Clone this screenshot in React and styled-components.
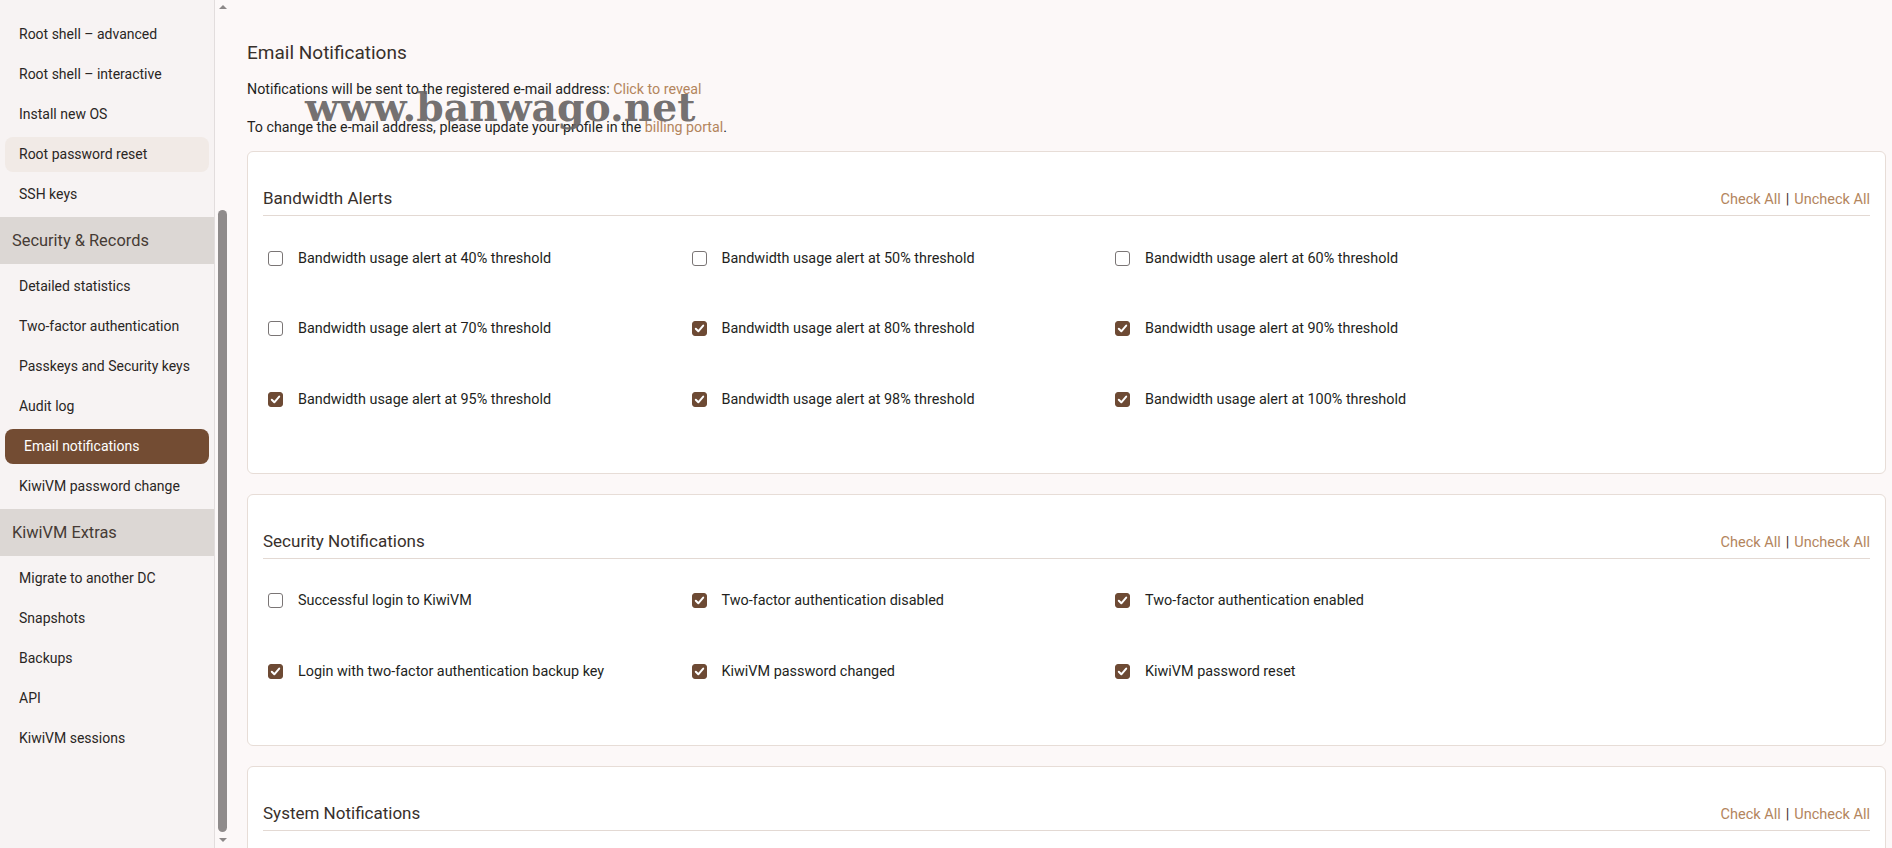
import React from "react";
import styled, { createGlobalStyle } from "styled-components";

const GlobalStyle = createGlobalStyle`
  html, body {
    margin: 0;
    padding: 0;
    height: 100%;
    overflow: hidden;
  }
  body {
    font-family: Roboto, "Noto Sans", Arial, sans-serif;
    background: #fcf8f8;
    color: #212529;
  }
  * { box-sizing: border-box; }
`;

const Page = styled.div`
  display: flex;
  height: 100vh;
  overflow: hidden;
`;

const SidebarWrap = styled.aside`
  flex: 0 0 229px;
  display: flex;
  height: 100%;
`;

const Nav = styled.nav`
  width: 215px;
  border-right: 1px solid #e2dddd;
  background: #f7f3f3;
  display: flex;
  flex-direction: column;
  padding-top: 14px;
  overflow: hidden;
`;

const NavLink = styled.a`
  display: flex;
  align-items: center;
  height: 35px;
  margin: 2.5px 5px;
  padding-left: ${(p) => (p.$active ? "19px" : "14px")};
  border-radius: 8px;
  font-size: 14px;
  color: ${(p) => (p.$active ? "#ffffff" : "#2a2624")};
  background: ${(p) =>
    p.$active ? "#734c33" : p.$hover ? "#f1eae6" : "transparent"};
  text-decoration: none;
  white-space: nowrap;
`;

const NavHeader = styled.div`
  display: flex;
  align-items: center;
  height: 47px;
  margin: 2.5px 0;
  padding-left: 12px;
  background: #dcd7d4;
  color: #463b35;
  font-size: 16.4px;
  font-weight: 400;
`;

const ScrollTrack = styled.div`
  width: 14px;
  display: flex;
  flex-direction: column;
  align-items: center;
  padding-top: 5px;
  padding-left: 1px;
`;

const ArrowUp = styled.div`
  width: 0;
  height: 0;
  border-left: 4.5px solid transparent;
  border-right: 4.5px solid transparent;
  border-bottom: 4px solid #8c8888;
`;

const ArrowDown = styled.div`
  width: 0;
  height: 0;
  margin-top: 6px;
  border-left: 4.5px solid transparent;
  border-right: 4.5px solid transparent;
  border-top: 4px solid #8c8888;
`;

const Thumb = styled.div`
  width: 9px;
  height: 622px;
  margin-top: 201px;
  border-radius: 5px;
  background: #8f8b8b;
`;

const Main = styled.main`
  position: relative;
  flex: 1;
  min-width: 0;
  padding: 0 6px 0 18px;
  overflow: hidden;
`;

const Title = styled.h2`
  margin: 41px 0 14px;
  font-size: 19px;
  line-height: 24px;
  font-weight: 400;
  color: #38302c;
`;

const Intro = styled.p`
  margin: 0 0 18px;
  font-size: 14.25px;
  line-height: 20px;
  color: #231f1d;
  &:last-of-type {
    margin-bottom: 14px;
  }
`;

const Link = styled.a`
  color: #b3855d;
  text-decoration: none;
`;

const Watermark = styled.div`
  position: absolute;
  left: 76px;
  top: 88px;
  font-family: "DejaVu Serif", "Liberation Serif", serif;
  font-weight: 700;
  font-size: 39.3px;
  line-height: 39px;
  color: rgba(104, 100, 100, 0.92);
  pointer-events: none;
  white-space: nowrap;
`;

const Card = styled.section`
  background: #ffffff;
  border: 1px solid #e7ddd7;
  border-radius: 6px;
  padding: 0 15px;
  margin-bottom: 20px;
`;

const CardHeader = styled.div`
  display: flex;
  justify-content: space-between;
  align-items: baseline;
  padding: 34px 0 5px;
  border-bottom: 1px solid #e3d9d3;
`;

const CardTitle = styled.h3`
  margin: 0;
  font-size: 17px;
  line-height: 24px;
  font-weight: 400;
  color: #38302c;
`;

const Actions = styled.div`
  font-size: 14.5px;
  color: #b3855d;
  display: flex;
  align-items: baseline;
`;

const Sep = styled.span`
  color: #3f322a;
  margin: 0 5px;
`;

const Grid = styled.div`
  display: grid;
  grid-template-columns: repeat(3, 423.5px);
  grid-auto-rows: 70.5px;
  padding: 7px 0 38px 5px;
`;

const Item = styled.label`
  display: flex;
  align-items: center;
  gap: 15px;
  font-size: 14.4px;
  color: #231f1d;
`;

const Box = styled.span`
  flex: 0 0 15px;
  width: 15px;
  height: 15px;
  border-radius: 3px;
  border: 1px solid ${(p) => (p.$checked ? "#6d4a34" : "#7a7575")};
  background: ${(p) => (p.$checked ? "#6d4a34" : "#ffffff")};
  display: flex;
  align-items: center;
  justify-content: center;
`;

const Check = ({ checked }) => (
  <Box $checked={checked}>
    {checked && (
      <svg width="11" height="11" viewBox="0 0 11 11">
        <path
          d="M1.8 5.8 L4.3 8.3 L9.2 2.6"
          fill="none"
          stroke="#ffffff"
          strokeWidth="2"
          strokeLinecap="round"
          strokeLinejoin="round"
        />
      </svg>
    )}
  </Box>
);

const nav = [
  { t: "Root shell – advanced" },
  { t: "Root shell – interactive" },
  { t: "Install new OS" },
  { t: "Root password reset", hover: true },
  { t: "SSH keys" },
  { h: "Security & Records" },
  { t: "Detailed statistics" },
  { t: "Two-factor authentication" },
  { t: "Passkeys and Security keys" },
  { t: "Audit log" },
  { t: "Email notifications", active: true },
  { t: "KiwiVM password change" },
  { h: "KiwiVM Extras" },
  { t: "Migrate to another DC" },
  { t: "Snapshots" },
  { t: "Backups" },
  { t: "API" },
  { t: "KiwiVM sessions" },
];

const sections = [
  {
    title: "Bandwidth Alerts",
    items: [
      ["Bandwidth usage alert at 40% threshold", false],
      ["Bandwidth usage alert at 50% threshold", false],
      ["Bandwidth usage alert at 60% threshold", false],
      ["Bandwidth usage alert at 70% threshold", false],
      ["Bandwidth usage alert at 80% threshold", true],
      ["Bandwidth usage alert at 90% threshold", true],
      ["Bandwidth usage alert at 95% threshold", true],
      ["Bandwidth usage alert at 98% threshold", true],
      ["Bandwidth usage alert at 100% threshold", true],
    ],
  },
  {
    title: "Security Notifications",
    items: [
      ["Successful login to KiwiVM", false],
      ["Two-factor authentication disabled", true],
      ["Two-factor authentication enabled", true],
      ["Login with two-factor authentication backup key", true],
      ["KiwiVM password changed", true],
      ["KiwiVM password reset", true],
    ],
  },
  {
    title: "System Notifications",
    items: [],
  },
];

export default function App() {
  return (
    <>
      <GlobalStyle />
      <Page>
        <SidebarWrap>
          <Nav>
            {nav.map((n, i) =>
              n.h ? (
                <NavHeader key={i}>{n.h}</NavHeader>
              ) : (
                <NavLink key={i} $active={n.active} $hover={n.hover}>
                  {n.t}
                </NavLink>
              )
            )}
          </Nav>
          <ScrollTrack>
            <ArrowUp />
            <Thumb />
            <ArrowDown />
          </ScrollTrack>
        </SidebarWrap>
        <Main>
          <Title>Email Notifications</Title>
          <Intro>
            Notifications will be sent to the registered e-mail address:{" "}
            <Link>Click to reveal</Link>
          </Intro>
          <Intro>
            To change the e-mail address, please update your profile in the{" "}
            <Link>billing portal</Link>.
          </Intro>
          {sections.map((s) => (
            <Card key={s.title}>
              <CardHeader>
                <CardTitle>{s.title}</CardTitle>
                <Actions>
                  <Link>Check All</Link>
                  <Sep>|</Sep>
                  <Link>Uncheck All</Link>
                </Actions>
              </CardHeader>
              <Grid>
                {s.items.map(([label, c]) => (
                  <Item key={label}>
                    <Check checked={c} />
                    {label}
                  </Item>
                ))}
              </Grid>
            </Card>
          ))}
          <Watermark>www.banwago.net</Watermark>
        </Main>
      </Page>
    </>
  );
}
